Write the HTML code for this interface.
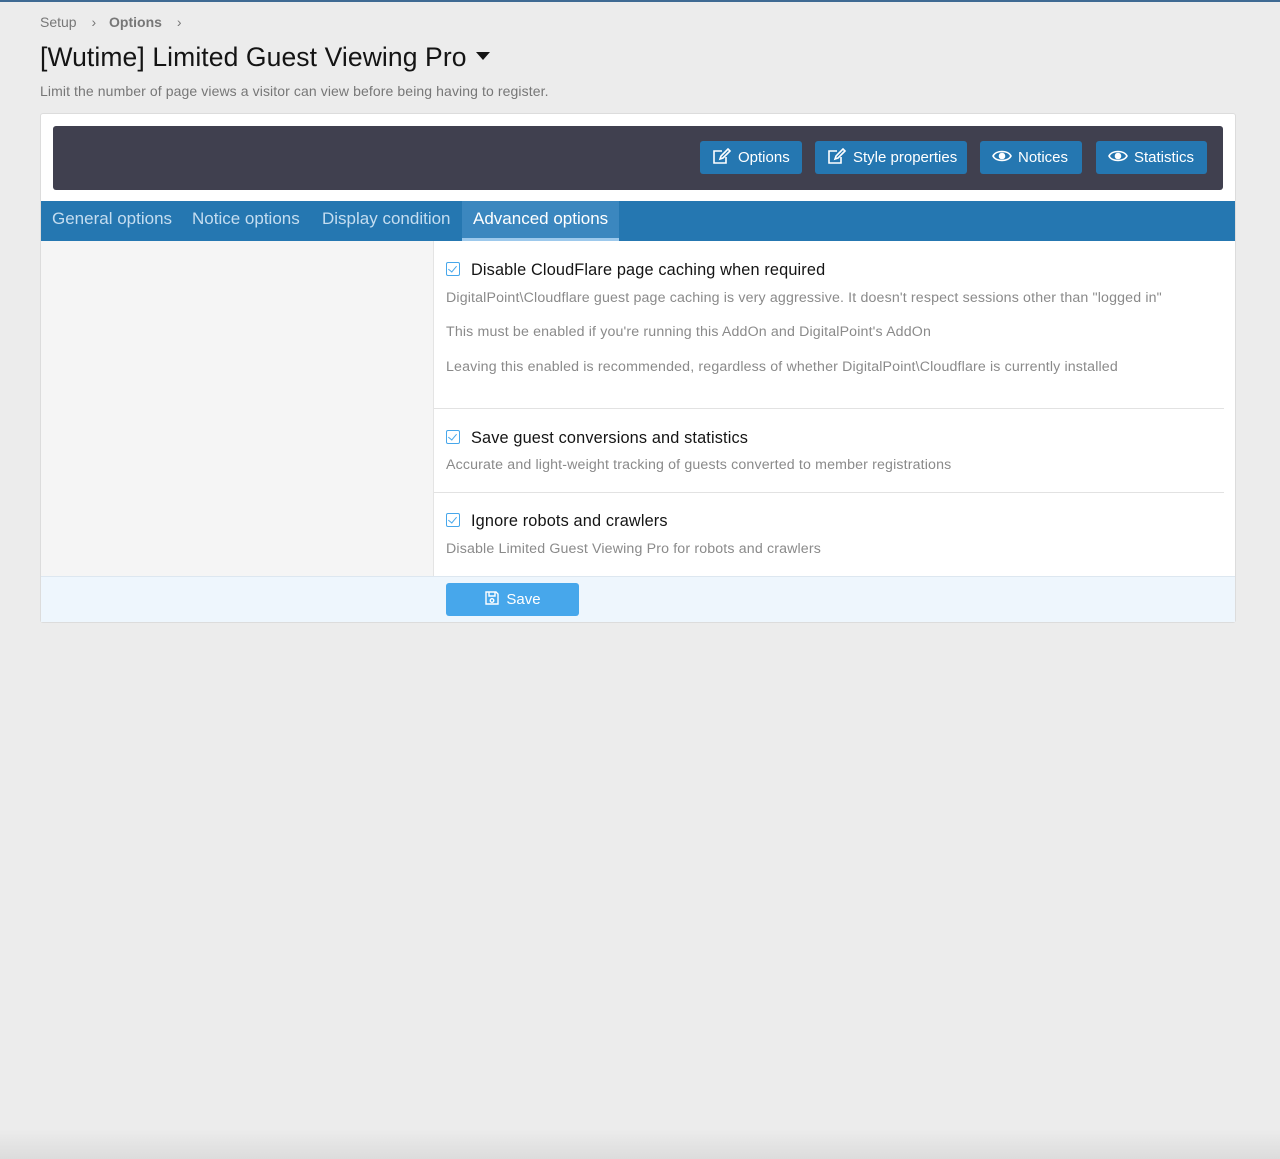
<!DOCTYPE html>
<html><head><style>
*{box-sizing:border-box;margin:0;padding:0}
body{width:1280px;height:1159px;background:#ececec;font-family:"Liberation Sans",sans-serif;position:relative;overflow:hidden}
.topline{position:absolute;left:0;top:0;width:1280px;height:2px;background:#3f6a93}
.bottom{position:absolute;left:0;right:0;bottom:0;height:30px;background:linear-gradient(#ececec,#dcdcdc)}
.crumb{position:absolute;left:40px;top:14px;font-size:14px;color:#777}
.crumb b{color:#777;margin:0 9px 0 11px;font-weight:normal}
.title{position:absolute;left:40px;top:42px;font-size:26.5px;color:#141414;letter-spacing:0.1px}
.tri{display:inline-block;width:0;height:0;border-left:7px solid transparent;border-right:7px solid transparent;border-top:8px solid #141414;vertical-align:middle;margin-left:9px;position:relative;top:-3px}
.desc{position:absolute;left:40px;top:83px;font-size:14px;color:#777;letter-spacing:0.1px}
.box{position:absolute;left:40px;top:113px;width:1196px;height:510px;background:#fff;border:1px solid #dcdcdc;border-radius:3px}
.dark{position:absolute;left:12px;top:12px;width:1170px;height:64px;background:#40404f;border-radius:3px}
.btn{position:absolute;top:15px;height:33px;background:#2577b1;border-radius:3px;color:#fff;font-size:15px;line-height:33px;padding-left:12px}
.btn svg{vertical-align:middle;margin-right:6px;position:relative;top:-2px}
.tabs{position:absolute;left:0;top:87px;width:1194px;height:40px;background:#2577b1}
.tab{position:absolute;top:0;height:40px;line-height:36px;font-size:17px;color:#c4ddf0}
.tab.act{background:#3b87bf;color:#fff;border-bottom:3px solid #9dc9ec;padding:0 11px}
.left{position:absolute;left:0;top:127px;width:393px;height:335px;background:#f5f5f5;border-right:1px solid #e4e4e4}
.row{position:absolute;left:393px;width:790px;border-bottom:1px solid #e2e2e2}
.lab{position:absolute;left:12px;font-size:16.3px;color:#141414;letter-spacing:0.15px}
.cb{display:inline-block;width:14px;height:14px;border:1px solid #47a7eb;border-radius:2px;vertical-align:middle;margin-right:11px;position:relative;top:-2px}
.cb:after{content:"";position:absolute;left:3px;top:1px;width:4px;height:7px;border:solid #47a7eb;border-width:0 1.5px 1.5px 0;transform:rotate(40deg)}
.hint{position:absolute;left:12px;font-size:14.2px;color:#8a8a8a;letter-spacing:0.15px}
.foot{position:absolute;left:0;top:462px;width:1194px;height:46px;background:#eef6fd;border-top:1px solid #dde7f0}
.save{position:absolute;left:405px;top:6px;width:133px;height:33px;background:#47a7eb;border-radius:3px;color:#fff;font-size:15px;line-height:33px;text-align:center}
</style></head><body>
<div class="topline"></div>
<div class="crumb">Setup <b>›</b> <span style="font-weight:bold">Options</span> <b>›</b></div>
<div class="title">[Wutime] Limited Guest Viewing Pro<span class="tri"></span></div>
<div class="desc">Limit the number of page views a visitor can view before being having to register.</div>
<div class="box">
 <div class="dark">
  <div class="btn" style="left:647px;width:102px"><svg width="20" height="17" viewBox="0 0 20 17" fill="none" stroke="#fff" stroke-width="1.6"><path d="M10 3H2v12h12V9"/><path d="M8 11l1-3 7-7 2 2-7 7z"/></svg>Options</div>
  <div class="btn" style="left:762px;width:152px"><svg width="20" height="17" viewBox="0 0 20 17" fill="none" stroke="#fff" stroke-width="1.6"><path d="M10 3H2v12h12V9"/><path d="M8 11l1-3 7-7 2 2-7 7z"/></svg>Style properties</div>
  <div class="btn" style="left:927px;width:102px"><svg width="20" height="14" viewBox="0 0 20 14" fill="none" stroke="#fff" stroke-width="1.6"><path d="M1 7c3-6 15-6 18 0-3 6-15 6-18 0z"/><circle cx="10" cy="7" r="2.5" fill="#fff"/></svg>Notices</div>
  <div class="btn" style="left:1043px;width:111px"><svg width="20" height="14" viewBox="0 0 20 14" fill="none" stroke="#fff" stroke-width="1.6"><path d="M1 7c3-6 15-6 18 0-3 6-15 6-18 0z"/><circle cx="10" cy="7" r="2.5" fill="#fff"/></svg>Statistics</div>
 </div>
 <div class="tabs">
  <div class="tab" style="left:11px">General options</div>
  <div class="tab" style="left:151px">Notice options</div>
  <div class="tab" style="left:281px">Display condition</div>
  <div class="tab act" style="left:421px">Advanced options</div>
 </div>
 <div class="left"></div>
 <div class="row" style="top:127px;height:168px">
  <div class="lab" style="top:20px"><span class="cb"></span>Disable CloudFlare page caching when required</div>
  <div class="hint" style="top:49px">DigitalPoint\Cloudflare guest page caching is very aggressive. It doesn't respect sessions other than "logged in"</div>
  <div class="hint" style="top:83px">This must be enabled if you're running this AddOn and DigitalPoint's AddOn</div>
  <div class="hint" style="top:118px">Leaving this enabled is recommended, regardless of whether DigitalPoint\Cloudflare is currently installed</div>
 </div>
 <div class="row" style="top:295px;height:84px">
  <div class="lab" style="top:20px"><span class="cb"></span>Save guest conversions and statistics</div>
  <div class="hint" style="top:48px">Accurate and light-weight tracking of guests converted to member registrations</div>
 </div>
 <div class="row" style="top:379px;height:83px;border:none">
  <div class="lab" style="top:19px"><span class="cb"></span>Ignore robots and crawlers</div>
  <div class="hint" style="top:48px">Disable Limited Guest Viewing Pro for robots and crawlers</div>
 </div>
 <div class="foot"><div class="save"><svg width="16" height="16" viewBox="0 0 16 16" fill="none" stroke="#fff" stroke-width="1.4" style="vertical-align:middle;margin-right:6px;position:relative;top:-2px"><path d="M2 2h10l2 2v10H2z"/><path d="M5 2v4h6V2"/><circle cx="8" cy="10.5" r="1.8"/></svg>Save</div></div>
</div>
<div class="bottom"></div>
</body></html>
